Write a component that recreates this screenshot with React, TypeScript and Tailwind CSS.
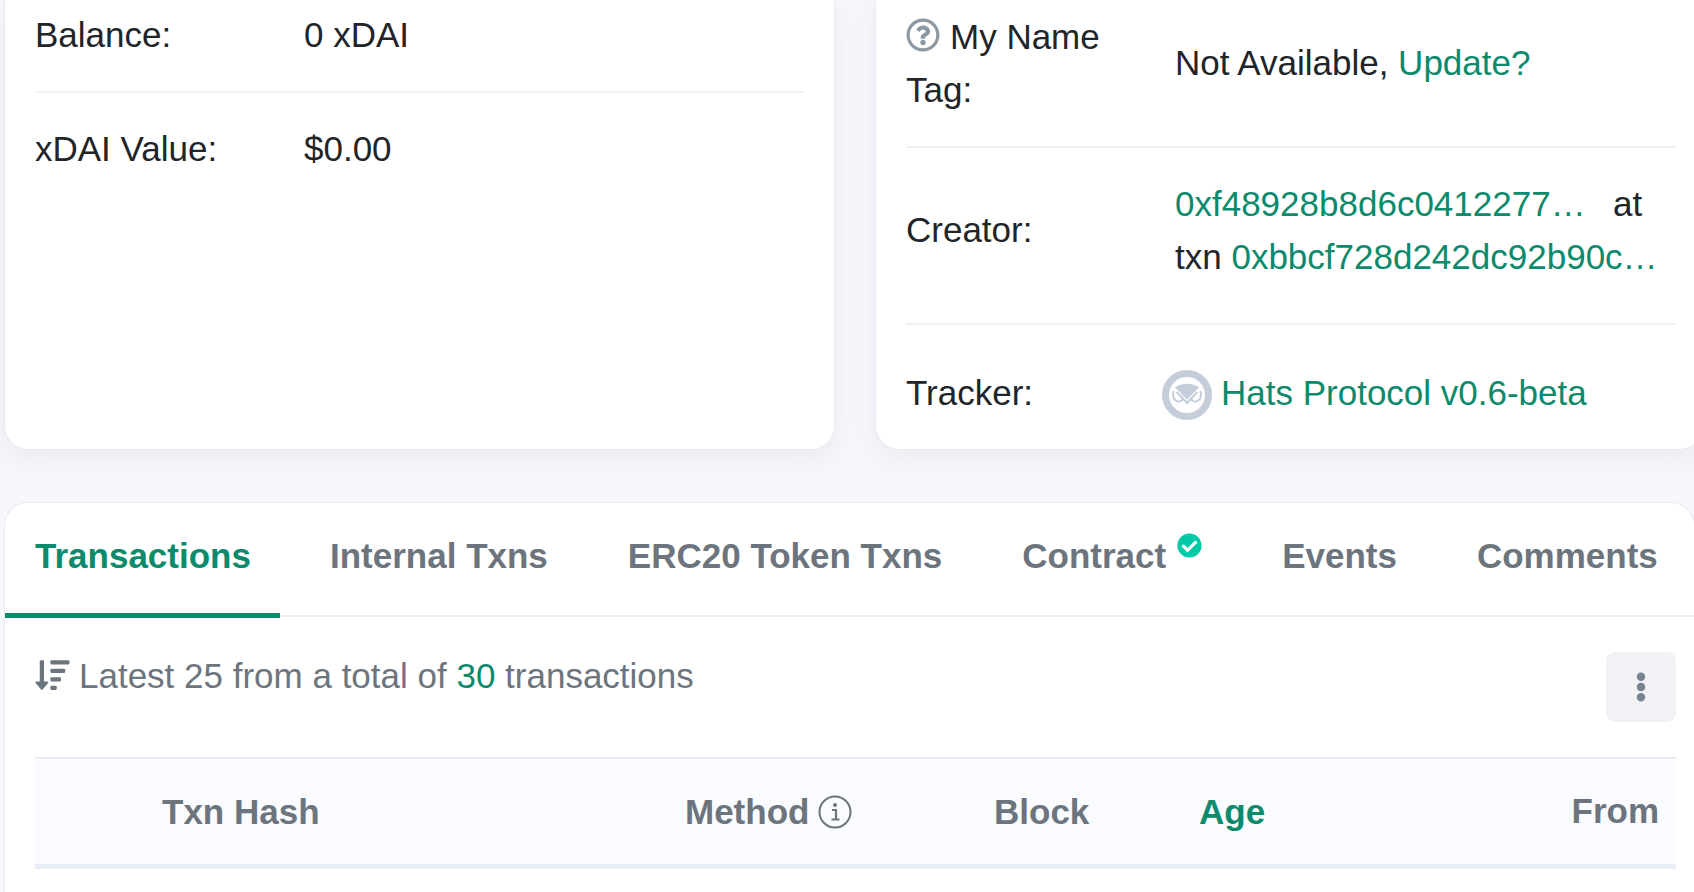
import { FaCheckCircle, FaEllipsisV, FaRegQuestionCircle, FaSortAmountDown } from "react-icons/fa";

const tabs = ["Internal Txns", "ERC20 Token Txns", "Contract", "Events", "Comments"];

function OwlLogo() {
  return (
    <svg viewBox="0 0 50 50" className="w-[50px] h-[50px] shrink-0">
      <circle cx="25" cy="25" r="21.5" fill="#fff" stroke="#c4cdd9" strokeWidth="7" />
      <path d="M13 17.5 C20 12.5 30 12.5 37 17.5 L25 29.5 Z" fill="#c4cdd9" />
      <path
        d="M11.5 21 C10 26 12 31 16.5 31.5 C20 31.8 21.5 29.5 19.5 27 L14.5 22 M38.5 21 C40 26 38 31 33.5 31.5 C30 31.8 28.5 29.5 30.5 27 L35.5 22 M19.5 27 L25 33 L30.5 27"
        fill="none"
        stroke="#c4cdd9"
        strokeWidth="2"
      />
    </svg>
  );
}

function InfoIcon() {
  return (
    <svg viewBox="0 0 34 34" className="w-[34px] h-[34px] ml-[9px] shrink-0 text-[#6c757d]" fill="none" stroke="currentColor">
      <circle cx="17" cy="17" r="15.5" strokeWidth="2" />
      <circle cx="17" cy="10" r="2" fill="currentColor" stroke="none" />
      <path d="M14 15 H18 V24 M13.5 24.5 H21.5" strokeWidth="2.2" />
    </svg>
  );
}

function App() {
  return (
    <div
      className="w-[1694px] h-[892px] overflow-hidden bg-[#f6f7fa] pl-[4px] flex flex-col text-[35px] leading-[53px] text-[#212529]"
      style={{ fontFamily: '"Liberation Sans", Arial, sans-serif' }}
    >
      <div className="flex gap-[40px] h-[450px] shrink-0">
        <section className="w-[831px] shrink-0 bg-white border border-t-0 border-[#e7eaf3] rounded-b-[24px] pl-[30px] pr-[30px] shadow-[0_8px_24px_rgba(189,197,209,0.2)]">
          <div className="flex pt-[8px] pb-[30px] border-b-2 border-[#eff1f4]">
            <div className="w-[269px]">Balance:</div>
            <div>0 xDAI</div>
          </div>
          <div className="flex pt-[29px]">
            <div className="w-[269px]">xDAI Value:</div>
            <div>$0.00</div>
          </div>
        </section>

        <section className="w-[829px] shrink-0 bg-white border border-t-0 border-[#e7eaf3] rounded-b-[24px] pl-[30px] pr-[27px] shadow-[0_8px_24px_rgba(189,197,209,0.2)]">
          <div className="flex items-center pt-[10px] pb-[30px] border-b-2 border-[#eff1f4]">
            <div className="w-[269px] pr-[50px]">
              <FaRegQuestionCircle className="inline-block w-[34px] h-[34px] mr-[10px] align-[-3px] text-[#8c98a4]" />
              My Name Tag:
            </div>
            <div className="pb-[2px]">
              Not Available, <span className="text-[#0b8a6c]">Update?</span>
            </div>
          </div>
          <div className="flex items-center pt-[29px] pb-[40px] border-b-2 border-[#eff1f4]">
            <div className="w-[269px] pb-[2px]">Creator:</div>
            <div className="flex-1">
              <div className="flex">
                <span className="text-[#0b8a6c] w-[438px]">0xf48928b8d6c0412277…</span>
                <span>at</span>
              </div>
              <div>
                txn <span className="text-[#0b8a6c]">0xbbcf728d242dc92b90c…</span>
              </div>
            </div>
          </div>
          <div className="flex items-center pt-[41px]">
            <div className="w-[256px] pb-[4px]">Tracker:</div>
            <OwlLogo />
            <span className="ml-[9px] pb-[4px] text-[#0b8a6c]">Hats Protocol v0.6-beta</span>
          </div>
        </section>
      </div>

      <section className="mt-[52px] w-[1691px] flex-1 bg-white border border-b-0 border-[#e7eaf3] rounded-t-[24px]">
        <div className="flex gap-[20px] h-[114px] border-b-2 border-[#eaedf2] font-bold text-[#6c757d]">
          <div className="w-[275px] pl-[30px] h-[115px] pt-[26px] text-[#0b8a6c] border-b-[5px] border-[#0b8a6c]">Transactions</div>
          {tabs.map((tab) => (
            <div key={tab} className="flex items-start px-[30px] pt-[26px]">
              {tab}
              {tab === "Contract" && (
                <FaCheckCircle className="ml-[11px] mt-[4px] w-[25px] h-[25px] text-[#00c9a7]" />
              )}
            </div>
          ))}
        </div>

        <div className="pl-[30px] pr-[18px]">
          <div className="flex justify-between items-start h-[140px] pt-[32px]">
            <div className="flex items-start text-[#6c757d]">
              <FaSortAmountDown className="w-[37px] h-[34px] mt-[9px] -ml-[1px] mr-[8px] shrink-0" />
              <span>
                Latest 25 from a total of <span className="text-[#0b8a6c]">30</span> transactions
              </span>
            </div>
            <div className="w-[70px] h-[70px] mt-[3px] rounded-[9px] bg-[#f1f2f5] flex items-center justify-center">
              <FaEllipsisV className="w-[26px] h-[30px] text-[#77838f]" />
            </div>
          </div>

          <div className="flex items-center h-[112px] bg-[#fafbff] border-t-2 border-b-[5px] border-[#e9edf5] font-bold text-[#6c757d]">
            <div className="w-[650px] pl-[127px]">Txn Hash</div>
            <div className="w-[309px] flex items-center">
              Method
              <InfoIcon />
            </div>
            <div className="w-[205px]">Block</div>
            <div className="text-[#0b8a6c]">Age</div>
            <div className="flex-1 text-right pr-[17px] pb-[2px]">From</div>
          </div>
        </div>
      </section>
    </div>
  );
}

export default App;
